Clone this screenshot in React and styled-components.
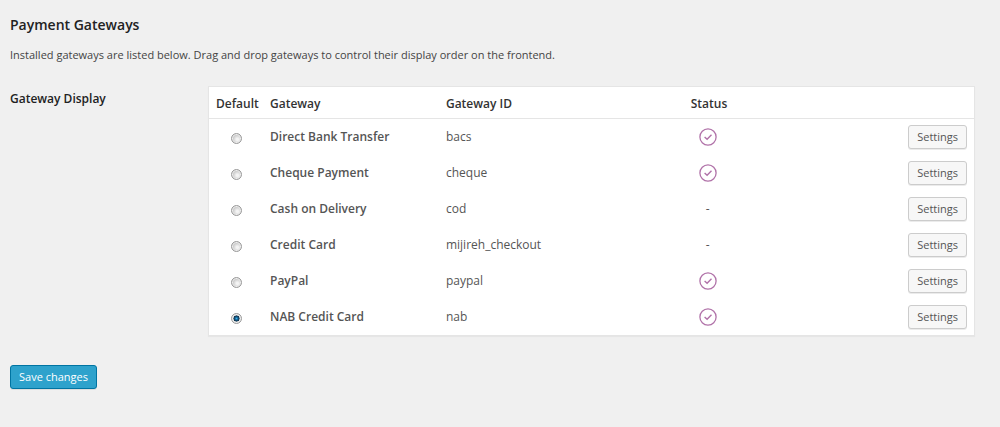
import { useState } from "react";
import styled, { createGlobalStyle } from "styled-components";

const GlobalStyle = createGlobalStyle`
  *,
  *::before,
  *::after {
    box-sizing: border-box;
  }

  body {
    margin: 0;
    background: #f0f0f0;
    color: #444;
    font-family: "Open Sans", sans-serif;
    font-size: 12px;
    line-height: 18px;
  }
`;

const Page = styled.form`
  padding: 14px 25px 36px 10px;
`;

const Title = styled.h3`
  margin: 0;
  color: #222;
  font-size: 14px;
  font-weight: 600;
  line-height: 22px;
`;

const Description = styled.p`
  margin: 10px 0 22px;
  font-size: 11px;
`;

const FormRow = styled.div`
  display: grid;
  grid-template-columns: 198px 1fr;
  align-items: start;
`;

const FormLabel = styled.h4`
  margin: 0;
  padding-top: 4px;
  color: #222;
  font-size: 12px;
  font-weight: 600;
`;

const Table = styled.table`
  width: 100%;
  table-layout: fixed;
  border: 1px solid #e5e5e5;
  border-spacing: 0;
  background: #fff;
  box-shadow: 0 1px 1px rgba(0, 0, 0, 0.04);
`;

const HeadCell = styled.th`
  width: ${(props) => props.$width || "auto"};
  height: 32px;
  padding: 2px 7px 0;
  border-bottom: 1px solid #e5e5e5;
  color: #333;
  font-weight: 600;
  text-align: ${(props) => props.$align || "left"};
  white-space: nowrap;
`;

const Cell = styled.td`
  height: 36px;
  padding: 0 7px;
  color: #555;
  font-weight: ${(props) => (props.$strong ? 600 : 400)};
  text-align: ${(props) => props.$align || "left"};
`;

const Radio = styled.input`
  appearance: none;
  display: block;
  width: 11px;
  height: 11px;
  margin: 2px auto 0;
  border: 1px solid #999;
  border-radius: 50%;
  background: radial-gradient(circle at 60% 60%, #f4f4f4 15%, #c8c8c8 60%);
  box-shadow: inset 0 0 0 1px #eee;

  &:checked {
    background: radial-gradient(
      circle,
      #3fb4ea 0,
      #14699c 20%,
      #0b2b44 44%,
      #e4e4e4 52%
    );
  }
`;

const StatusIcon = styled.svg`
  display: block;
  width: 18px;
  height: 18px;
  margin: 0 auto;
  fill: none;
  stroke: #b173a9;
`;

const SettingsButton = styled.button`
  height: 24px;
  padding: 0 8px;
  border: 1px solid #ccc;
  border-radius: 3px;
  background: #f7f7f7;
  box-shadow: 0 1px 0 rgba(0, 0, 0, 0.08);
  color: #555;
  font: inherit;
  font-size: 11px;
  line-height: 22px;
`;

const SaveButton = styled(SettingsButton)`
  margin-top: 29px;
  border-color: #0074a2;
  background: #2ea2cc;
  color: #fff;
`;

const gateways = [
  { id: "bacs", name: "Direct Bank Transfer", enabled: true },
  { id: "cheque", name: "Cheque Payment", enabled: true },
  { id: "cod", name: "Cash on Delivery", enabled: false },
  { id: "mijireh_checkout", name: "Credit Card", enabled: false },
  { id: "paypal", name: "PayPal", enabled: true },
  { id: "nab", name: "NAB Credit Card", enabled: true },
];

function EnabledIcon() {
  return (
    <StatusIcon viewBox="0 0 18 18" role="img" aria-label="Enabled">
      <circle cx="9" cy="9" r="8.1" strokeWidth="1.3" />
      <path d="M5.6 8.9 8.1 11.2 12.5 6.8" strokeWidth="1.4" />
    </StatusIcon>
  );
}

function GatewayRow({ gateway, isDefault, onSelect }) {
  const { id, name, enabled } = gateway;

  return (
    <tr>
      <Cell $align="center">
        <Radio
          type="radio"
          name="default_gateway"
          value={id}
          aria-label={name}
          checked={isDefault}
          onChange={() => onSelect(id)}
        />
      </Cell>
      <Cell $strong>{name}</Cell>
      <Cell>{id}</Cell>
      <Cell $align="center">{enabled ? <EnabledIcon /> : "-"}</Cell>
      <Cell $align="right">
        <SettingsButton type="button">Settings</SettingsButton>
      </Cell>
    </tr>
  );
}

function App() {
  const [defaultGateway, setDefaultGateway] = useState("nab");

  return (
    <>
      <GlobalStyle />
      <Page onSubmit={(e) => e.preventDefault()}>
        <Title>Payment Gateways</Title>
        <Description>
          Installed gateways are listed below. Drag and drop gateways to control
          their display order on the frontend.
        </Description>
        <FormRow>
          <FormLabel id="gateway-display">Gateway Display</FormLabel>
          <Table aria-labelledby="gateway-display">
            <thead>
              <tr>
                <HeadCell $width="54px" $align="center">
                  Default
                </HeadCell>
                <HeadCell $width="23%">Gateway</HeadCell>
                <HeadCell $width="32%">Gateway ID</HeadCell>
                <HeadCell $width="48px" $align="center">
                  Status
                </HeadCell>
                <HeadCell />
              </tr>
            </thead>
            <tbody>
              {gateways.map((gateway) => (
                <GatewayRow
                  key={gateway.id}
                  gateway={gateway}
                  isDefault={gateway.id === defaultGateway}
                  onSelect={setDefaultGateway}
                />
              ))}
            </tbody>
          </Table>
        </FormRow>
        <SaveButton type="submit">Save changes</SaveButton>
      </Page>
    </>
  );
}

export default App;
